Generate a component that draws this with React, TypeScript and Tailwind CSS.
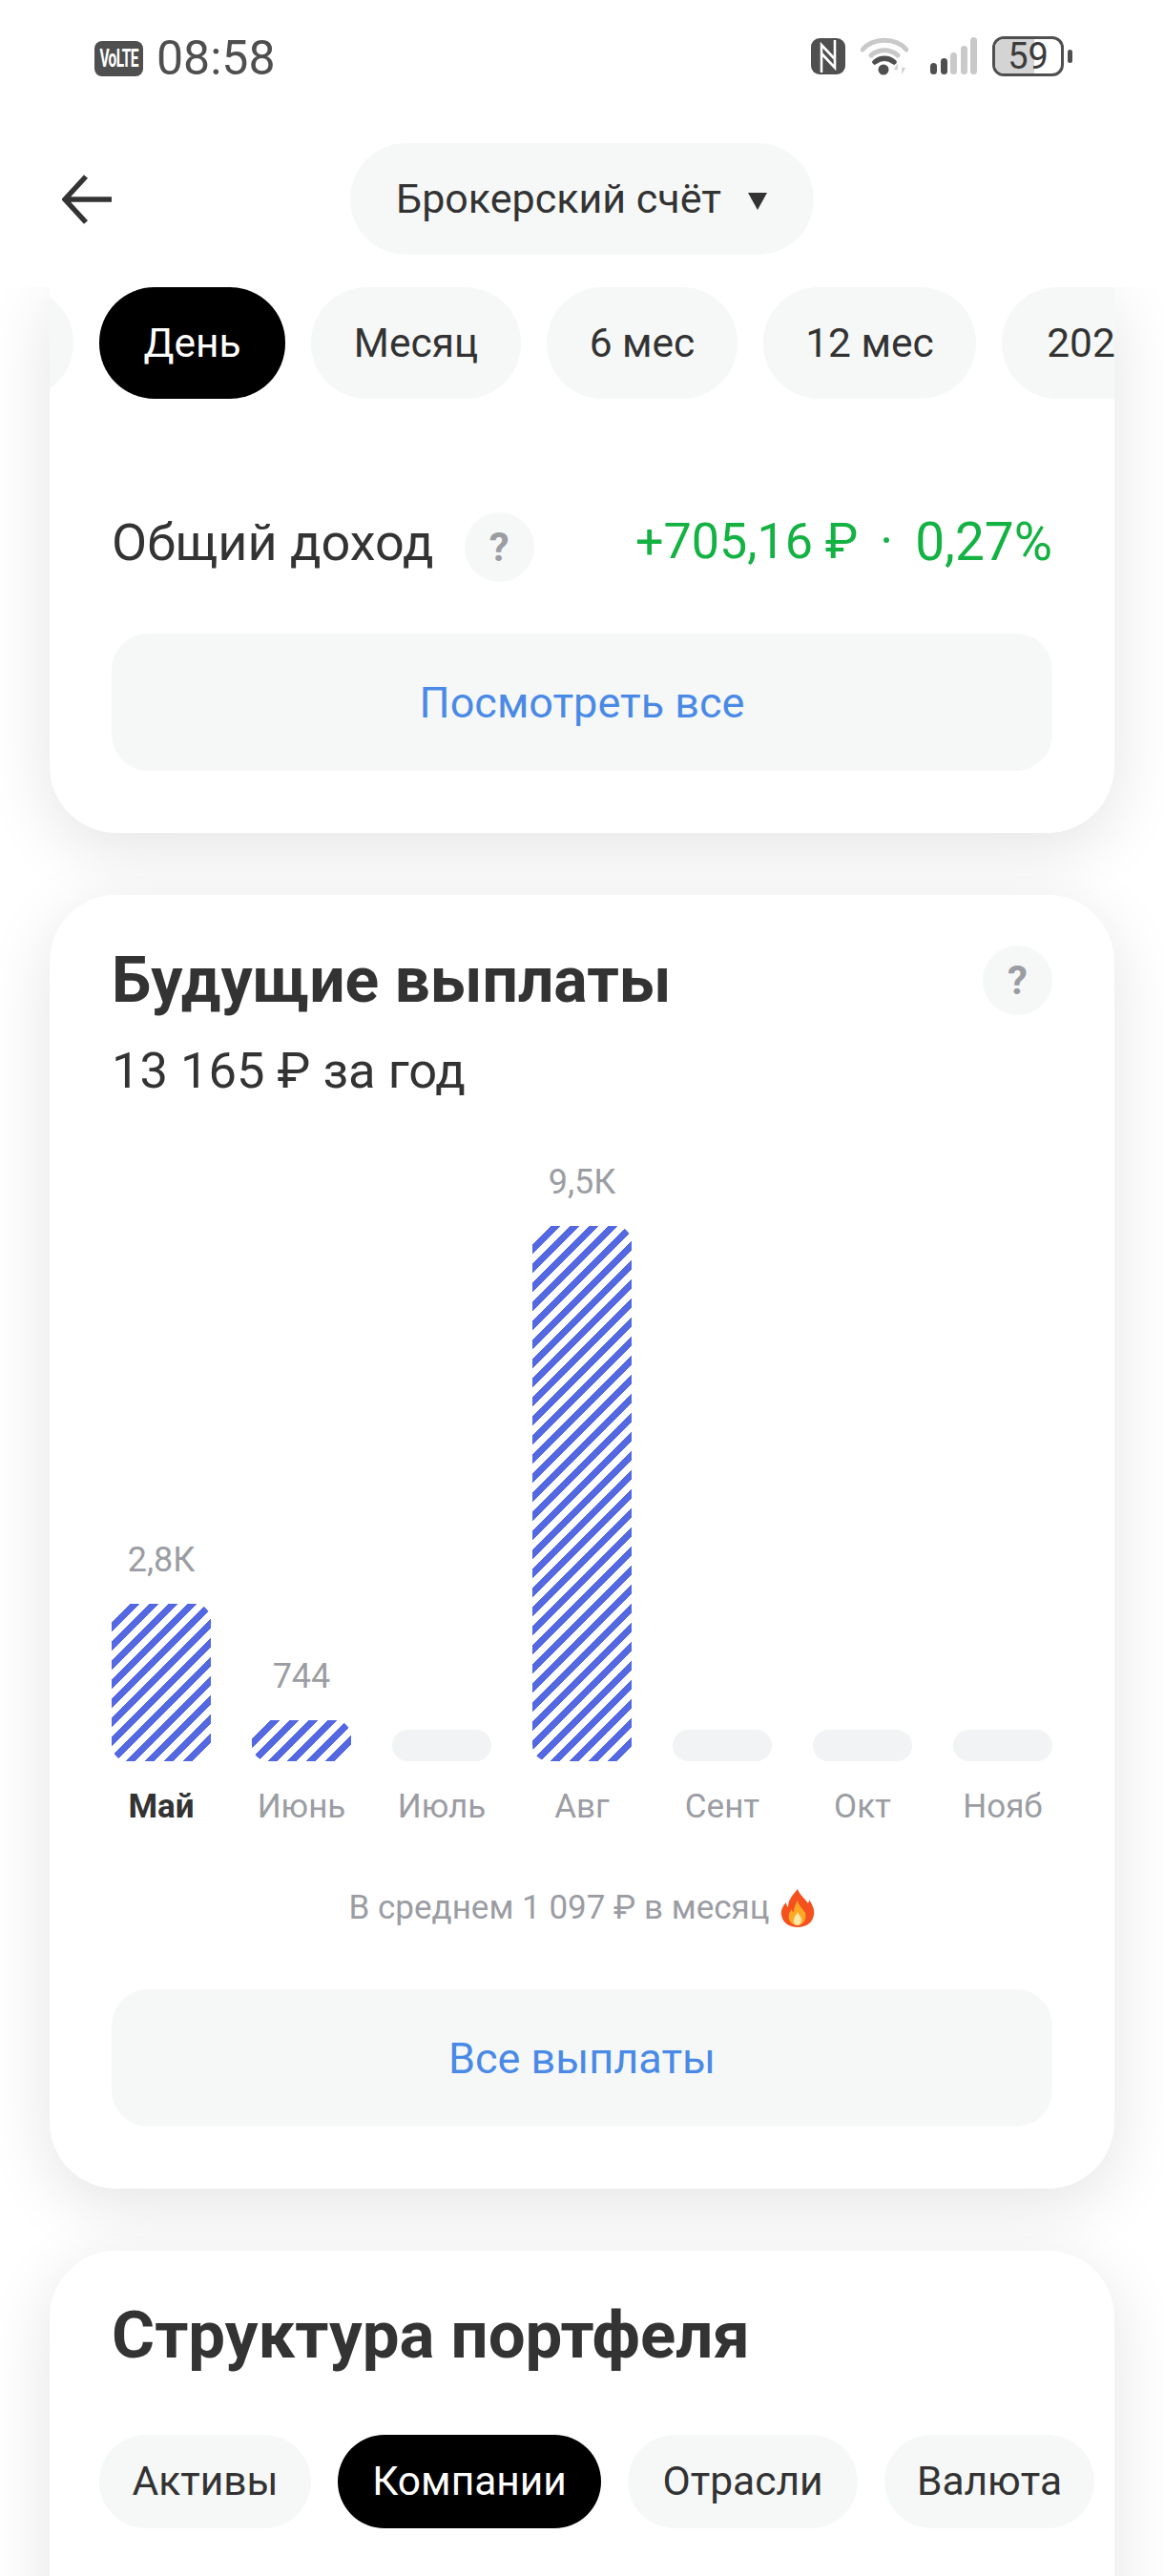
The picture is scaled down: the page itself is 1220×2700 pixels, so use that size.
const font = "font-['Roboto','Noto_Sans',sans-serif]";

const periods = [
  { t: "", w: "w-[200px]", cls: "-ml-[175px]" },
  { t: "День", w: "w-[195px]", active: true },
  { t: "Месяц", w: "w-[220px]" },
  { t: "6 мес", w: "w-[200px]" },
  { t: "12 мес", w: "w-[223px]" },
  { t: "2024", w: "w-[190px]" },
];

const bars = [
  { m: "Май", v: "2,8К", h: "h-[165px]", on: true, bold: true },
  { m: "Июнь", v: "744", h: "h-[43px]", on: true },
  { m: "Июль", h: "h-[33px]" },
  { m: "Авг", v: "9,5К", h: "h-[561px]", on: true },
  { m: "Сент", h: "h-[33px]" },
  { m: "Окт", h: "h-[33px]" },
  { m: "Нояб", h: "h-[33px]" },
];

const tabs = [
  { t: "Активы", w: "w-[222px]" },
  { t: "Компании", w: "w-[276px]", active: true },
  { t: "Отрасли", w: "w-[241px]" },
  { t: "Валюта", w: "w-[220px]" },
];

function Help() {
  return (
    <div className="flex h-[73px] w-[73px] shrink-0 items-center justify-center rounded-full bg-[#f6f8f8] text-[42px] font-bold text-[#9b9da3]">?</div>
  );
}

function WideButton({ children }: { children: string }) {
  return (
    <div className="flex h-[144px] items-center justify-center rounded-[38px] bg-[#f6f8f8] pt-[2px] text-[45px] text-[#4a8ae6]">{children}</div>
  );
}

function StatusIcons() {
  return (
    <div className="flex items-center">
      <svg width="36" height="38" viewBox="0 0 36 38" className="mr-[16px]">
        <rect width="36" height="38" rx="9" fill="#4f4f4f" />
        <path d="M11 36V7l14 15M25 2v29L11 16" fill="none" stroke="#fff" strokeWidth="2.6" />
      </svg>
      <svg width="50" height="40" viewBox="0 0 50 40" className="mr-[23px]">
        <path d="M2 13C13 0 37 0 48 13" fill="none" stroke="#c9c9c9" strokeWidth="5" strokeLinecap="round" />
        <path d="M11 19c8-7 20-7 28 0" fill="none" stroke="#c9c9c9" strokeWidth="5" strokeLinecap="round" />
        <path d="M15 26c6-5 14-5 20 0" fill="none" stroke="#4f4f4f" strokeWidth="5.5" strokeLinecap="round" />
        <circle cx="24" cy="34" r="5.5" fill="#4f4f4f" />
        <path d="M39 27l-4 7h3v5zM43 39l4-7h-3v-5z" fill="#c9c9c9" />
      </svg>
      <svg width="49" height="40" viewBox="0 0 49 40" className="mr-[16px]">
        <rect x="0" y="27" width="7" height="12" rx="3.5" fill="#4f4f4f" />
        <rect x="11" y="22" width="7" height="17" rx="3.5" fill="#4f4f4f" />
        <rect x="21" y="16" width="7" height="23" rx="3.5" fill="#c9c9c9" />
        <rect x="32" y="9" width="7" height="30" rx="3.5" fill="#c9c9c9" />
        <rect x="42" y="0" width="7" height="39" rx="3.5" fill="#c9c9c9" />
      </svg>
      <div className="relative h-[42px] w-[75px] overflow-hidden rounded-[12px] border-[3px] border-[#4f4f4f] text-center text-[38px] leading-[36px] text-[#3c3c3c]">
        <div className="absolute inset-y-0 left-0 w-[59%] bg-[#d4d4d4]" />
        <span className="relative">59</span>
      </div>
      <div className="ml-[4px] h-[14px] w-[5px] rounded-full bg-[#4f4f4f]" />
    </div>
  );
}

function Flame() {
  return (
    <svg width="36" height="40" viewBox="0 0 36 40" className="ml-[12px]">
      <path d="M18 0c2 6 7 9 11 15 1-2 1-3 1-4 4 6 6 11 5 16-1 8-8 13-17 13S2 35 1 27c-1-5 2-10 5-13 0 2 1 4 2 5 0-8 5-13 10-19z" fill="#f4511e" />
      <path d="M18 12c1 5 5 8 8 13 2 6-2 13-8 13s-11-5-9-12c1-2 2-4 3-5 0 2 1 3 2 3 0-5 2-8 4-12z" fill="#ffa726" />
      <path d="M18 24c1 3 4 5 4 8s-2 6-4 6-5-2-4-6c0-3 3-5 4-8z" fill="#ffe9a8" />
    </svg>
  );
}

export default function App() {
  return (
    <div className={`${font} h-[2700px] w-[1220px] overflow-hidden bg-white text-[#333333]`}>
      <header className="relative z-10 h-[301px] bg-white">
        <div className="flex h-[150px] items-start justify-between pl-[99px] pr-[96px] pt-[38px]">
          <div className="flex items-center">
            <div className="flex h-[37px] w-[51px] items-center justify-center rounded-[8px] bg-[#4f4f4f] text-[25px] font-bold leading-none text-white">
              <span className="scale-x-[0.62] tracking-[-1px]">VoLTE</span>
            </div>
            <span className="ml-[14px] text-[50px] leading-[46px] text-[#4f4f4f]">08:58</span>
          </div>
          <StatusIcons />
        </div>
        <div className="relative flex h-[117px] items-center justify-center">
          <svg width="54" height="54" viewBox="0 0 54 54" className="absolute left-[65px] top-[32px]">
            <path d="M25 3L3 27l22 24M3 27h49" fill="none" stroke="#333" strokeWidth="5.5" />
          </svg>
          <div className="flex h-[117px] w-[486px] items-center justify-center rounded-full bg-[#f6f8f8] text-[43px]">
            Брокерский счёт
            <svg width="22" height="18" viewBox="0 0 22 18" className="ml-[27px] mt-[5px]">
              <path d="M1 0h20L11 18z" fill="#333" />
            </svg>
          </div>
        </div>
      </header>

      <main className="flex flex-col gap-[65px] px-[52px]">
        <section className="rounded-b-[70px] bg-white px-[65px] pb-[65px] shadow-[0_16px_70px_rgba(0,0,0,0.11)]">
          <div className="-mx-[65px] flex gap-[27px] overflow-hidden">
            {periods.map((p, i) => (
              <div key={i} className={`flex h-[117px] shrink-0 items-center justify-center rounded-[58px] text-[42.5px] ${p.w} ${p.cls ?? ""} ${p.active ? "bg-black text-white" : "bg-[#f6f8f8]"}`}>
                {p.t}
              </div>
            ))}
          </div>
          <div className="mt-[110px] flex h-[80px] items-center">
            <span className="text-[54px]">Общий доход</span>
            <div className="ml-[32px] mt-[10px]"><Help /></div>
            <div className="ml-auto flex items-center text-[#14b143]">
              <span className="text-[52px]">+705,16 ₽</span>
              <span className="mx-[23px] text-[53px]">·</span>
              <span className="text-[55px]">0,27%</span>
            </div>
          </div>
          <div className="mt-[56px]"><WideButton>Посмотреть все</WideButton></div>
        </section>

        <section className="rounded-[70px] bg-white px-[65px] pb-[65px] pt-[45px] shadow-[0_16px_70px_rgba(0,0,0,0.11)]">
          <div className="flex h-[88px] items-center justify-between">
            <h2 className="text-[66px] font-bold">Будущие выплаты</h2>
            <Help />
          </div>
          <p className="mt-[19px] text-[52.5px] leading-[64px]">13 165 ₽ за год</p>
          <div className="mt-[60px] flex h-[632px] items-end gap-[43px]">
            {bars.map((b) => (
              <div key={b.m} className="flex w-[104px] flex-col items-center">
                {b.v && <span className="mb-[23px] text-[36px] leading-[46px] text-[#9b9da3]">{b.v}</span>}
                <div className={`w-full rounded-[17px] ${b.h} ${b.on ? "bg-[repeating-linear-gradient(135deg,#5468e2_0,#5468e2_7.07px,#ffffff_7.07px,#ffffff_14.142px)]" : "bg-[#f1f3f4]"}`} />
              </div>
            ))}
          </div>
          <div className="mt-[25px] flex gap-[43px]">
            {bars.map((b) => (
              <span key={b.m} className={`w-[104px] whitespace-nowrap text-center text-[35px] leading-[46px] ${b.bold ? "font-bold text-[#333333]" : "text-[#9b9da3]"}`}>{b.m}</span>
            ))}
          </div>
          <div className="mt-[58px] flex h-[50px] items-center justify-center text-[35px] text-[#9b9da3]">
            В среднем 1 097 ₽ в месяц
            <Flame />
          </div>
          <div className="mt-[60px]"><WideButton>Все выплаты</WideButton></div>
        </section>

        <section className="rounded-t-[70px] bg-white px-[65px] pt-[45px] shadow-[0_16px_70px_rgba(0,0,0,0.11)]">
          <h2 className="h-[88px] text-[69px] font-bold leading-[88px]">Структура портфеля</h2>
          <div className="-ml-[13px] mt-[60px] flex gap-[28px]">
            {tabs.map((t) => (
              <div key={t.t} className={`flex h-[98px] shrink-0 items-center justify-center rounded-[49px] text-[42.5px] ${t.w} ${t.active ? "bg-black text-white" : "bg-[#f6f8f8]"}`}>
                {t.t}
              </div>
            ))}
          </div>
          <div className="h-[200px]" />
        </section>
      </main>
    </div>
  );
}
